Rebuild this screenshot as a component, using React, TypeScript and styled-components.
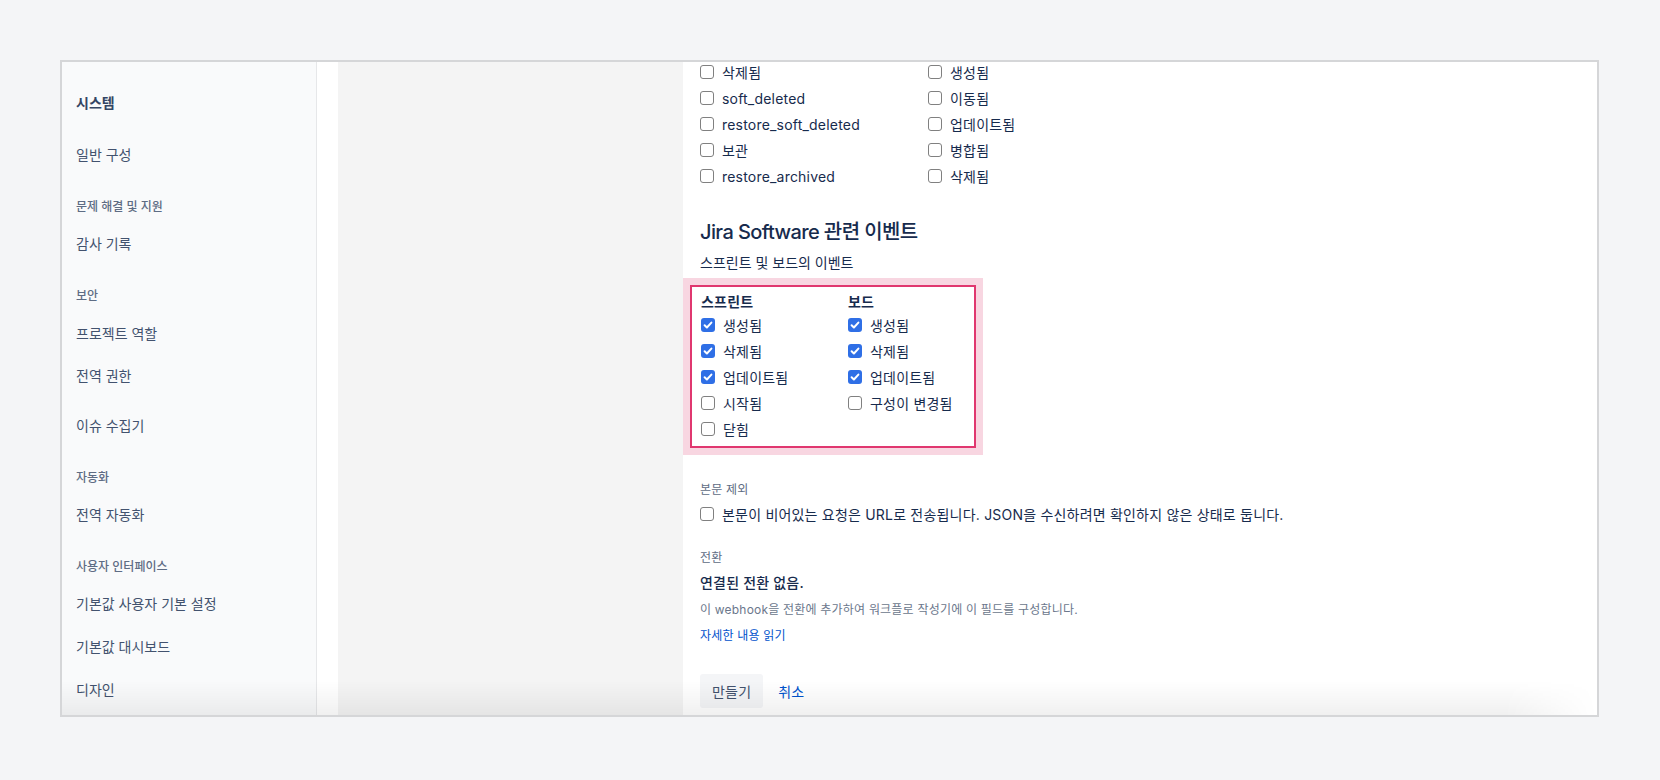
import React from "react";
import styled, { createGlobalStyle } from "styled-components";

const GlobalStyle = createGlobalStyle`
  html, body {
    margin: 0;
    padding: 0;
    background: #f4f5f7;
  }
  body {
    font-family: Inter, "Noto Sans CJK KR", sans-serif;
    letter-spacing: 0.2px;
    color: #172b4d;
    -webkit-font-smoothing: antialiased;
  }
`;

const Page = styled.div`
  padding: 60px 0 0 60px;
`;

const Frame = styled.div`
  position: relative;
  width: 1539px;
  height: 657px;
  box-sizing: border-box;
  border: 2px solid #d5d6d8;
  background: #fff;
  display: grid;
  grid-template-columns: 255px 21px 345px 1fr;
  overflow: hidden;
`;

const BottomFade = styled.div`
  position: absolute;
  left: 0;
  right: 0;
  bottom: 0;
  height: 34px;
  pointer-events: none;
  background: linear-gradient(to bottom, rgba(0, 0, 0, 0), rgba(0, 0, 0, 0.06));
  mask-image: linear-gradient(to right, #000 0%, #000 94%, transparent 100%);
`;

const Sidebar = styled.nav`
  background: #f9fafb;
  border-right: 1px solid #e6e7e9;
  padding: 31px 0 0 14px;
  display: flex;
  flex-direction: column;
  letter-spacing: 0;
`;

const SideHeading = styled.div`
  height: 20px;
  line-height: 20px;
  font-size: 14px;
  font-weight: 600;
  color: #344563;
`;

const SideSection = styled.div`
  height: 20px;
  line-height: 20px;
  margin-top: 22px;
  font-size: 12px;
  font-weight: 500;
  color: #5e6c84;
`;

const SideItem = styled.div<{ $gap?: number }>`
  height: 42px;
  display: flex;
  align-items: center;
  margin-top: ${(p) => p.$gap ?? 0}px;
  font-size: 14px;
  color: #42526e;
`;

const Strip = styled.div`
  background: #fff;
`;

const GrayColumn = styled.div`
  background: #f4f4f4;
`;

const Content = styled.main`
  padding-left: 17px;
  overflow: hidden;
  display: flex;
  flex-direction: column;
  align-items: flex-start;
`;

const EventGrid = styled.div`
  margin-top: -3px;
  display: grid;
  grid-template-columns: 228px auto;
`;

const Row = styled.label`
  height: 26px;
  display: flex;
  align-items: center;
  gap: 8px;
  font-size: 14px;
  color: #172b4d;
  white-space: nowrap;
`;

const Box = styled.span<{ $on?: boolean }>`
  width: 14px;
  height: 14px;
  box-sizing: border-box;
  border-radius: 3px;
  border: ${(p) => (p.$on ? "none" : "1px solid #808080")};
  background: ${(p) => (p.$on ? "#2f6fe6" : "#fff")};
  display: inline-flex;
  align-items: center;
  justify-content: center;
  flex-shrink: 0;
`;

const Heading = styled.h2`
  margin: 31px 0 0;
  font-size: 20px;
  line-height: 24px;
  font-weight: 500;
  letter-spacing: -0.6px;
  color: #172b4d;
`;

const SubHeading = styled.p`
  margin: 9px 0 0;
  font-size: 14px;
  line-height: 20px;
  letter-spacing: 0;
  color: #172b4d;
`;

const Highlight = styled.div`
  margin: 5px 0 0 -17px;
  width: 300px;
  box-sizing: border-box;
  padding: 7px;
  background: #f8d6e1;
`;

const Bordered = styled.div`
  border: 2px solid #e0376f;
  background: #fff;
  padding: 5px 0 4px 9px;
  display: grid;
  grid-template-columns: 147px auto;
`;

const GroupTitle = styled.div`
  height: 20px;
  line-height: 20px;
  font-size: 14px;
  font-weight: 600;
  color: #172b4d;
`;

const FieldLabel = styled.div<{ $top: number }>`
  margin-top: ${(p) => p.$top}px;
  font-size: 12px;
  line-height: 16px;
  color: #5e6c84;
`;

const Spaced = styled.div<{ $top: number }>`
  margin-top: ${(p) => p.$top}px;
`;

const Strong = styled.div`
  margin-top: 7px;
  font-size: 14px;
  line-height: 20px;
  font-weight: 500;
  color: #172b4d;
`;

const Hint = styled.div`
  margin-top: 9px;
  font-size: 12px;
  line-height: 16px;
  color: #6b778c;
`;

const Link = styled.a`
  margin-top: 10px;
  font-size: 12px;
  line-height: 16px;
  color: #0052cc;
  text-decoration: none;
`;

const Actions = styled.div`
  margin-top: 30px;
  display: flex;
  align-items: center;
  gap: 15px;
`;

const Button = styled.button`
  height: 34px;
  padding: 0 12px;
  border: none;
  border-radius: 3px;
  background: #f4f5f7;
  font-family: inherit;
  font-size: 14px;
  letter-spacing: inherit;
  color: #42526e;
`;

const TextButton = styled.button`
  padding: 0;
  border: none;
  background: none;
  font-family: inherit;
  font-size: 14px;
  letter-spacing: inherit;
  color: #0052cc;
`;

function Check({ label, on }: { label: string; on?: boolean }) {
  return (
    <Row>
      <Box $on={on}>
        {on && (
          <svg width="14" height="14" viewBox="0 0 14 14">
            <path
              d="M3.6 7.3 L5.9 9.5 L10.4 4.6"
              fill="none"
              stroke="#fff"
              strokeWidth="2"
              strokeLinecap="round"
              strokeLinejoin="round"
            />
          </svg>
        )}
      </Box>
      {label}
    </Row>
  );
}

const issueEvents = [
  ["삭제됨", "생성됨"],
  ["soft_deleted", "이동됨"],
  ["restore_soft_deleted", "업데이트됨"],
  ["보관", "병합됨"],
  ["restore_archived", "삭제됨"],
];

const sprintEvents = [
  { label: "생성됨", on: true },
  { label: "삭제됨", on: true },
  { label: "업데이트됨", on: true },
  { label: "시작됨" },
  { label: "닫힘" },
];

const boardEvents = [
  { label: "생성됨", on: true },
  { label: "삭제됨", on: true },
  { label: "업데이트됨", on: true },
  { label: "구성이 변경됨" },
];

export default function App() {
  return (
    <>
      <GlobalStyle />
      <Page>
        <Frame>
          <Sidebar>
            <SideHeading>시스템</SideHeading>
            <SideItem $gap={20}>일반 구성</SideItem>
            <SideSection>문제 해결 및 지원</SideSection>
            <SideItem $gap={5}>감사 기록</SideItem>
            <SideSection>보안</SideSection>
            <SideItem $gap={6}>프로젝트 역할</SideItem>
            <SideItem>전역 권한</SideItem>
            <SideItem $gap={8}>이슈 수집기</SideItem>
            <SideSection>자동화</SideSection>
            <SideItem $gap={5}>전역 자동화</SideItem>
            <SideSection>사용자 인터페이스</SideSection>
            <SideItem $gap={5}>기본값 사용자 기본 설정</SideItem>
            <SideItem $gap={1}>기본값 대시보드</SideItem>
            <SideItem $gap={1}>디자인</SideItem>
          </Sidebar>
          <Strip />
          <GrayColumn />
          <Content>
            <EventGrid>
              {issueEvents.map(([a, b], i) => (
                <React.Fragment key={i}>
                  <Check label={a} />
                  <Check label={b} />
                </React.Fragment>
              ))}
            </EventGrid>

            <Heading>Jira Software 관련 이벤트</Heading>
            <SubHeading>스프린트 및 보드의 이벤트</SubHeading>

            <Highlight>
              <Bordered>
                <div>
                  <GroupTitle>스프린트</GroupTitle>
                  {sprintEvents.map((e) => (
                    <Check key={e.label} label={e.label} on={e.on} />
                  ))}
                </div>
                <div>
                  <GroupTitle>보드</GroupTitle>
                  {boardEvents.map((e) => (
                    <Check key={e.label} label={e.label} on={e.on} />
                  ))}
                </div>
              </Bordered>
            </Highlight>

            <FieldLabel $top={27}>본문 제외</FieldLabel>
            <Spaced $top={3}>
              <Check label="본문이 비어있는 요청은 URL로 전송됩니다. JSON을 수신하려면 확인하지 않은 상태로 둡니다." />
            </Spaced>

            <FieldLabel $top={23}>전환</FieldLabel>
            <Strong>연결된 전환 없음.</Strong>
            <Hint>이 webhook을 전환에 추가하여 워크플로 작성기에 이 필드를 구성합니다.</Hint>
            <Link href="#">자세한 내용 읽기</Link>

            <Actions>
              <Button>만들기</Button>
              <TextButton>취소</TextButton>
            </Actions>
          </Content>
          <BottomFade />
        </Frame>
      </Page>
    </>
  );
}
